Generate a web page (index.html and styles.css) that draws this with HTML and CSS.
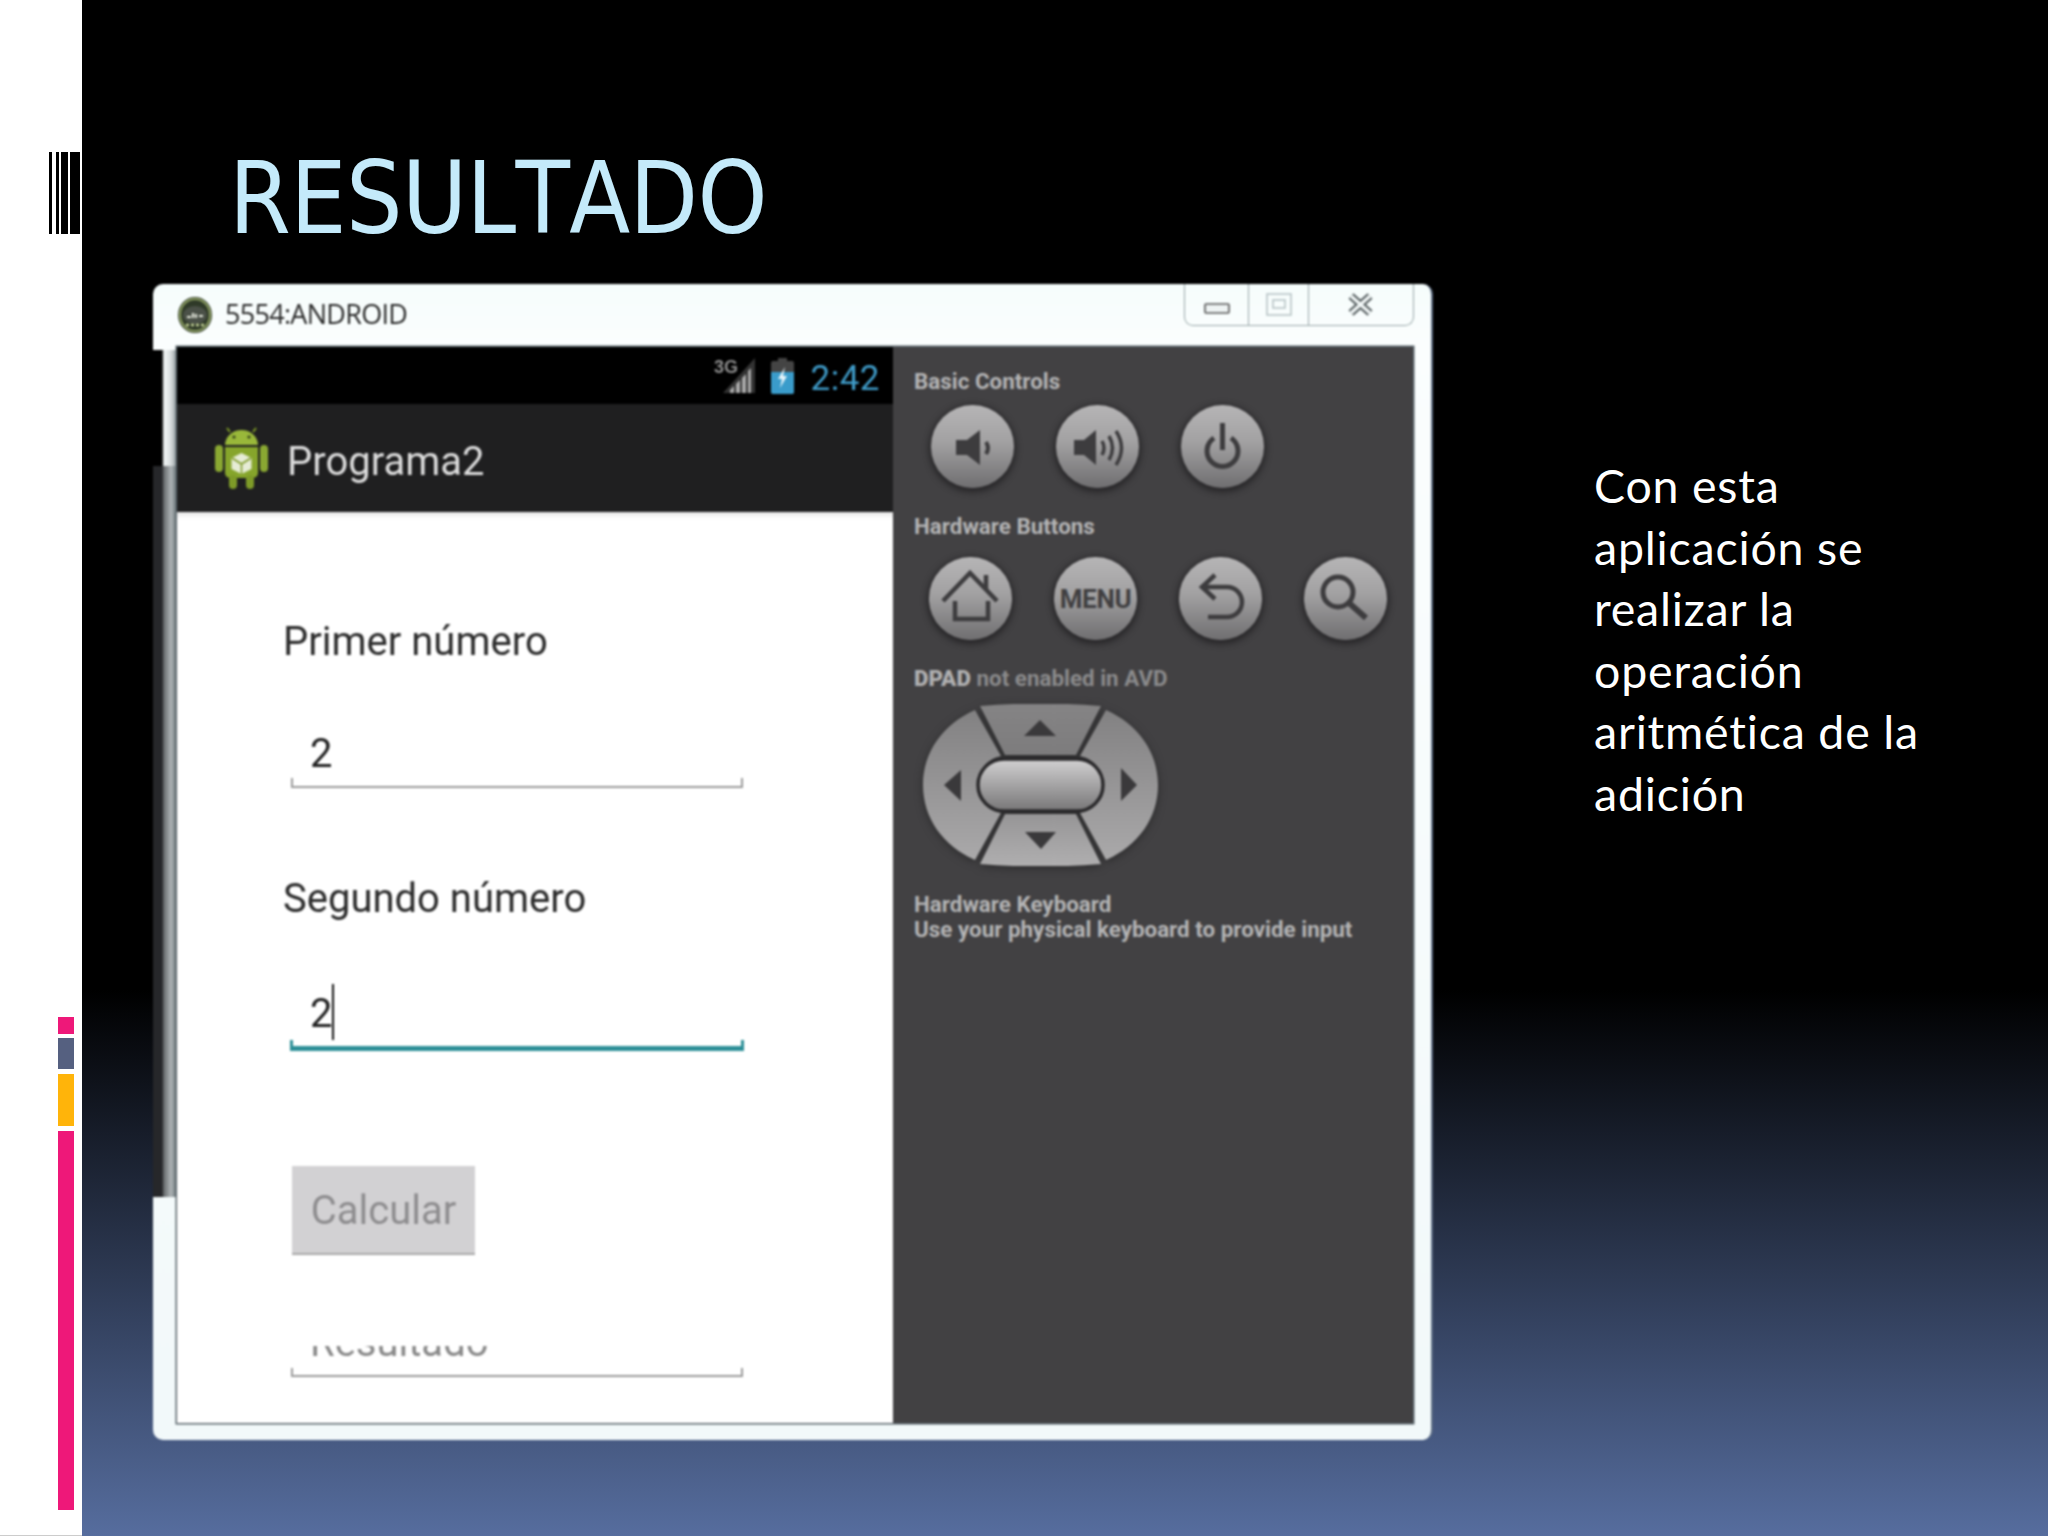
FILE: index.html
```html
<!DOCTYPE html>
<html lang="es">
<head>
<meta charset="utf-8">
<title>Resultado</title>
<link rel="stylesheet" href="styles.css">
</head>
<body>
<div class="page">
  <aside class="strip">
    <div class="barcode"><i class="b1"></i><i class="b2"></i><i class="b3"></i><i class="b4"></i></div>
    <div class="stack"><i class="s1"></i><i class="s2"></i><i class="s3"></i><i class="s4"></i></div>
  </aside>
  <main class="slide">
    <h1 class="title">RESULTADO</h1>
    <div class="row">
      <section class="window">
        <header class="titlebar">
          <svg class="appicon" viewBox="0 0 34 36"><ellipse cx="17" cy="18" rx="17" ry="18" fill="#2f3a28"/><ellipse cx="17" cy="18" rx="15" ry="16" fill="none" stroke="#8d9f62" stroke-width="2"/><ellipse cx="17" cy="18" rx="12" ry="9" fill="#4b5148"/><path d="M9 20h4M15 16v5M18 17v4M21 19h4" stroke="#e8ece0" stroke-width="2"/><path d="M8 28h18" stroke="#c9d79a" stroke-width="2.5" stroke-dasharray="3 2"/></svg>
          <span class="wintitle">5554:ANDROID</span>
          <div class="controls">
            <div class="ctl c-min"><svg width="26" height="12" viewBox="0 0 26 12"><rect x="1" y="1" width="24" height="9" rx="1" fill="#eef3f3" stroke="#555" stroke-width="1.6"/></svg></div>
            <div class="ctl c-max"><svg width="26" height="23" viewBox="0 0 26 23"><rect x="1" y="1" width="24" height="21" fill="none" stroke="#b4c0c2" stroke-width="1.5"/><rect x="7" y="7" width="12" height="8" fill="none" stroke="#b4c0c2" stroke-width="1.5"/></svg></div>
            <div class="ctl c-close"><svg width="27" height="23" viewBox="0 0 27 23"><path d="M4 3l19 17M23 3L4 20" stroke="#555d5f" stroke-width="7.5"/><path d="M4 3l19 17M23 3L4 20" stroke="#f1f6f6" stroke-width="3.5"/></svg></div>
          </div>
        </header>
        <div class="content">
          <div class="phone">
            <div class="statusbar">
              <svg class="signal" width="42" height="36" viewBox="0 0 42 36"><path d="M9 35L41 0v35z" fill="#333"/><path d="M22 35h4V22l-4 4zM28 35h4V16l-4 4zM34 35h3V10l-3 3zM16 35h4V28l-4 4z" fill="#a9a9a9"/><text class="threeg" x="0" y="15">3G</text></svg>
              <svg class="battery" width="23" height="36" viewBox="0 0 23 36"><path d="M7 0h9v3h5a2 2 0 0 1 2 2v29a2 2 0 0 1-2 2H2a2 2 0 0 1-2-2V5a2 2 0 0 1 2-2h5z" fill="#444"/><path d="M0 14h23v20a2 2 0 0 1-2 2H2a2 2 0 0 1-2-2z" fill="#3a9ccb"/><path d="M14 9l-7 12h4l-2 9 7-12h-4z" fill="#e8f5fb"/></svg>
              <span class="clock">2:42</span>
            </div>
            <div class="actionbar">
              <svg class="droid" width="53" height="62" viewBox="0 0 53 62"><path d="M15 5l-3-4M38 5l3-4" stroke="#7f9c26" stroke-width="2"/><path d="M10 18a16.500 15 0 0 1 33 0z" fill="#99b83a"/><circle cx="19" cy="10" r="1.600" fill="#33401a"/><circle cx="34" cy="10" r="1.600" fill="#33401a"/><path d="M10 20h33v26a5 5 0 0 1-5 5H15a5 5 0 0 1-5-5z" fill="#86a52b"/><rect x="0" y="18" width="8" height="27" rx="4" fill="#8aa832"/><rect x="45" y="18" width="8" height="27" rx="4" fill="#8aa832"/><rect x="14" y="48" width="8" height="14" rx="4" fill="#7e9b28"/><rect x="31" y="48" width="8" height="14" rx="4" fill="#7e9b28"/><path d="M26.500 26l10 5v11l-10 5-10-5V31z" fill="#e6ecd6"/><path d="M26.500 37v10M17 31l9.500 6 9.500-6" stroke="#7e9b28" stroke-width="1.500" fill="none"/></svg>
              <span class="appname">Programa2</span>
            </div>
            <div class="form">
              <div class="label l1">Primer número</div>
              <div class="value v1">2</div>
              <div class="rule"></div>
              <div class="label l2">Segundo número</div>
              <div class="value v2">2<span class="caret"></span></div>
              <div class="rule focus"></div>
              <div class="btn">Calcular</div>
              <div class="clip"><span>Resultado</span></div>
              <div class="rule last"></div>
            </div>
          </div>
          <div class="panel">
            <div class="plabel p1">Basic Controls</div>
            <div class="keys k1">
              <div class="key"><svg viewBox="0 0 83 83"><path d="M25 35h11l13-10v35L36 50H25z" fill="#3d3c3e"/><path d="M55 37q4 6 0 12" fill="none" stroke="#3d3c3e" stroke-width="4"/></svg></div>
              <div class="key"><svg viewBox="0 0 83 83"><path d="M18 35h10l12-10v35L28 50H18z" fill="#3d3c3e"/><path d="M46 36q4 7 0 14M53 31q7 12 0 24M60 26q11 17 0 34" fill="none" stroke="#3d3c3e" stroke-width="3.500"/></svg></div>
              <div class="key"><svg viewBox="0 0 83 83"><path d="M33 33a15.500 15.500 0 1 0 17 0" fill="none" stroke="#3d3c3e" stroke-width="5"/><path d="M41.500 18v27" stroke="#3d3c3e" stroke-width="5"/></svg></div>
            </div>
            <div class="plabel p2">Hardware Buttons</div>
            <div class="keys k2">
              <div class="key"><svg viewBox="0 0 83 83"><path d="M14 44l27-28 27 28M26 44v18h33V44" fill="none" stroke="#3d3c3e" stroke-width="4.500"/><path d="M57 18v14" stroke="#3d3c3e" stroke-width="4.500"/></svg></div>
              <div class="key menu">MENU</div>
              <div class="key"><svg viewBox="0 0 83 83"><path d="M36 18L23 30l13 12" fill="none" stroke="#3d3c3e" stroke-width="4.500"/><path d="M24 30h24a15 15 0 0 1 0 30H29" fill="none" stroke="#3d3c3e" stroke-width="4.500"/></svg></div>
              <div class="key"><svg viewBox="0 0 83 83"><circle cx="34" cy="35" r="15" fill="none" stroke="#3d3c3e" stroke-width="5"/><path d="M45 46l17 15" stroke="#3d3c3e" stroke-width="6"/></svg></div>
            </div>
            <div class="plabel p3"><b>DPAD</b> <span>not enabled in AVD</span></div>
            <svg class="dpad" width="235" height="162" viewBox="0 0 235 162">
              <defs>
                <linearGradient id="gTop" x1="0" y1="0" x2="0" y2="1"><stop offset="0" stop-color="#858485"/><stop offset="1" stop-color="#7d7c7d"/></linearGradient>
                <linearGradient id="gBot" x1="0" y1="0" x2="0" y2="1"><stop offset="0" stop-color="#969596"/><stop offset="1" stop-color="#b0afb0"/></linearGradient>
                <linearGradient id="gSide" x1="0" y1="0" x2="0" y2="1"><stop offset="0" stop-color="#828182"/><stop offset="1" stop-color="#aaa9aa"/></linearGradient>
                <linearGradient id="gPill" x1="0" y1="0" x2="0" y2="1"><stop offset="0" stop-color="#d2d1d2"/><stop offset="1" stop-color="#777677"/></linearGradient>
              </defs>
              <path d="M52 6C20 20 0 48 0 81s20 61 52 75l26-47c-14-2-24-14-24-28s10-26 24-29z" fill="url(#gSide)"/>
              <path d="M183 6c32 14 52 42 52 75s-20 61-52 75l-26-47c14-2 24-14 24-28s-10-26-24-29z" fill="url(#gSide)"/>
              <path d="M57 2q60-5 121 0l-25 49H82z" fill="url(#gTop)"/>
              <path d="M57 160q60 5 121 0l-25-50H82z" fill="url(#gBot)"/>
              <rect x="55" y="55" width="125" height="52" rx="26" fill="url(#gPill)" stroke="#2b2a2c" stroke-width="3.500"/>
              <path d="M117 16l16 16h-32zM102 128h31l-15 17zM38 66v31L21 81zM198 64v33l16-16z" fill="#3a393b"/>
            </svg>
            <div class="plabel p4">Hardware Keyboard<br>Use your physical keyboard to provide input</div>
          </div>
        </div>
      </section>
      <p class="note">Con esta<br>aplicación se<br>realizar la<br>operación<br>aritmética de la<br>adición</p>
    </div>
  </main>
</div>
</body>
</html>
```
FILE: styles.css
```css
* { box-sizing: border-box; margin: 0; padding: 0; }
html, body { width: 2048px; height: 1536px; overflow: hidden; background: #000; }
.page { display: flex; width: 2048px; height: 1536px; }

/* left white strip */
.strip { width: 82px; height: 1536px; background: #fff; border-bottom: 1px solid #ccc; display: flex; flex-direction: column; flex: none; }
.barcode { display: flex; height: 82px; margin-top: 152px; margin-left: 49px; }
.barcode i { display: block; background: #000; height: 100%; }
.b1 { width: 3px; margin-right: 4px; }
.b2 { width: 3px; margin-right: 2px; }
.b3 { width: 6.500px; margin-right: 2.500px; }
.b4 { width: 10px; }
.stack { display: flex; flex-direction: column; width: 16px; margin: 783px 0 0 58px; }
.stack i { display: block; }
.s1 { height: 17px; background: #ee1879; margin-bottom: 4px; }
.s2 { height: 31px; background: #556080; margin-bottom: 5px; }
.s3 { height: 52px; background: #ffb40a; margin-bottom: 5px; }
.s4 { height: 379px; background: #ee1879; }

/* slide */
.slide { flex: 1; height: 1536px; background: linear-gradient(180deg, #000 0, #000 990px, #566d9e 1536px); display: flex; flex-direction: column; }
.title { height: 284px; padding: 149px 0 0 147px; font: 400 99px/100px "DejaVu Sans Condensed", "DejaVu Sans", sans-serif; font-kerning: none; letter-spacing: -.6px; color: #c4eafa; filter: blur(.4px); }
.row { display: flex; align-items: flex-start; margin-left: 71px; }

/* window */
.window { position: relative; width: 1280px; height: 1156px; flex: none; background: linear-gradient(180deg, #f6fdfc 0, #fbfefe 60px, #f2f9fa 100%); border-radius: 10px; border-right: 2px solid #5d6d84; display: flex; flex-direction: column; filter: blur(.8px); }
.window::before { content: ""; position: absolute; left: 0; top: 66px; width: 24px; height: 116px; background: linear-gradient(90deg, #000 0, #000 9px, #f4f8f8 11px, #d5dadb 18px, #8b9496 24px); }
.window::after { content: ""; position: absolute; left: 0; top: 182px; width: 24px; height: 731px; background: linear-gradient(90deg, #26272a 0, #26272a 9px, #6b6e70 11px, #aeb4b6 18px, #6f797c 23px); }
.titlebar { position: relative; height: 63px; display: flex; align-items: flex-start; padding: 13px 0 0 25px; flex: none; }
.appicon { width: 34px; height: 36px; flex: none; }
.wintitle { margin: 2px 0 0 13px; font: 400 27px/30px "Open Sans", sans-serif; letter-spacing: -.7px; color: #2a2a2a; }
.controls { position: absolute; top: 0; left: 1031px; width: 230px; height: 42px; display: flex; border: 1.500px solid #98a6a8; border-top: 0; border-radius: 0 0 9px 9px; }
.ctl { display: flex; align-items: flex-start; justify-content: center; }
.c-min { width: 64px; padding-top: 19px; border-right: 1.500px solid #98a6a8; }
.c-max { width: 60px; padding-top: 9px; border-right: 1.500px solid #98a6a8; }
.c-close { flex: 1; padding: 9px 2px 0 0; }

.content { display: flex; height: 1076px; margin: 0 18px 0 24px; box-shadow: 0 0 0 1.500px #59646a; position: relative; z-index: 1; }
.phone { width: 716px; display: flex; flex-direction: column; flex: none; }
.statusbar { height: 57px; background: #000; display: flex; align-items: flex-start; justify-content: flex-end; padding: 11px 13px 0 0; flex: none; }
.threeg { font: 700 18px "Liberation Sans Narrow", "Liberation Sans", sans-serif; fill: #8e8e8e; }
.signal { margin-right: 15px; }
.battery { margin-right: 17px; }
.clock { margin-top: 3px; font: 400 35px/36px Roboto, sans-serif; color: #3f9bc8; letter-spacing: .5px; }
.actionbar { height: 108px; background: #1f1f20; display: flex; align-items: center; padding-left: 38px; flex: none; }
.droid { margin-right: 19px; flex: none; }
.appname { margin-top: 7px; font: 400 40px/48px Roboto, sans-serif; color: #dcdcdc; }
.form { flex: 1; background: #fff; box-shadow: inset 0 6px 6px -4px #d8d8d8; display: flex; flex-direction: column; }
.label { font: 400 40px/48px Roboto, sans-serif; color: #2c2c2c; margin-left: 106px; }
.l1 { margin-top: 106px; }
.l2 { margin-top: 87px; }
.value { font: 400 40px/48px Roboto, sans-serif; color: #222; margin-left: 133px; height: 48px; display: flex; }
.v1 { margin-top: 64px; }
.v2 { margin-top: 67px; margin-bottom: 2px; }
.caret { width: 2px; height: 56px; margin: -6px 0 0 0; background: #111; }
.rule { width: 452px; height: 10px; margin-left: 114px; border: 2px solid #9a9a9a; border-top: 0; }
.rule.focus { width: 454px; height: 11px; margin-left: 113px; border-color: #2c8f97; border-width: 0 3px 5px; }
.rule.last { height: 9px; margin-top: 9px; }
.btn { width: 183px; height: 89px; margin: 115px 0 0 115px; background: #d2d1d3; border-bottom: 2px solid #a9a9a9; font: 400 40px/90px Roboto, sans-serif; color: #8e8d8f; text-align: center; }
.clip { height: 13px; margin: 91px 0 0 133px; overflow: hidden; }
.clip span { display: block; margin-top: -27px; font: 400 40px/48px Roboto, sans-serif; color: #8a8a8a; }

/* emulator side panel */
.panel { flex: 1; background: #424143; padding: 21px 0 0 21px; display: flex; flex-direction: column; }
.plabel { font: 700 22.400px/26px Roboto, sans-serif; color: #b4b4b5; }
.plabel b { color: #b0b0b1; }
.plabel span { color: #8b8b8c; }
.p2 { margin-top: 25px; }
.p3 { margin-top: 25px; }
.p4 { margin-top: 26px; line-height: 25px; }
.keys { display: flex; gap: 42px; }
.k1 { margin: 11px 0 0 17px; }
.k2 { margin: 18px 0 0 15px; }
.key { width: 83px; height: 83px; border-radius: 50%; background: linear-gradient(180deg, #b6b5b6 0, #a2a1a2 45%, #6f6e70 100%); box-shadow: 0 2px 6px 2px #262527; display: flex; align-items: center; justify-content: center; flex: none; }
.key svg { width: 83px; height: 83px; display: block; }
.menu { font: 700 26px/1 Roboto, sans-serif; color: #403f41; letter-spacing: -.3px; }
.dpad { margin: 13px 0 0 9px; flex: none; filter: drop-shadow(0 2px 4px #2a2a2b); }

/* note */
.note { margin: 171px 0 0 161px; font: 400 46.500px/61.500px Lato, sans-serif; letter-spacing: .8px; color: #fff; white-space: nowrap; }
```
